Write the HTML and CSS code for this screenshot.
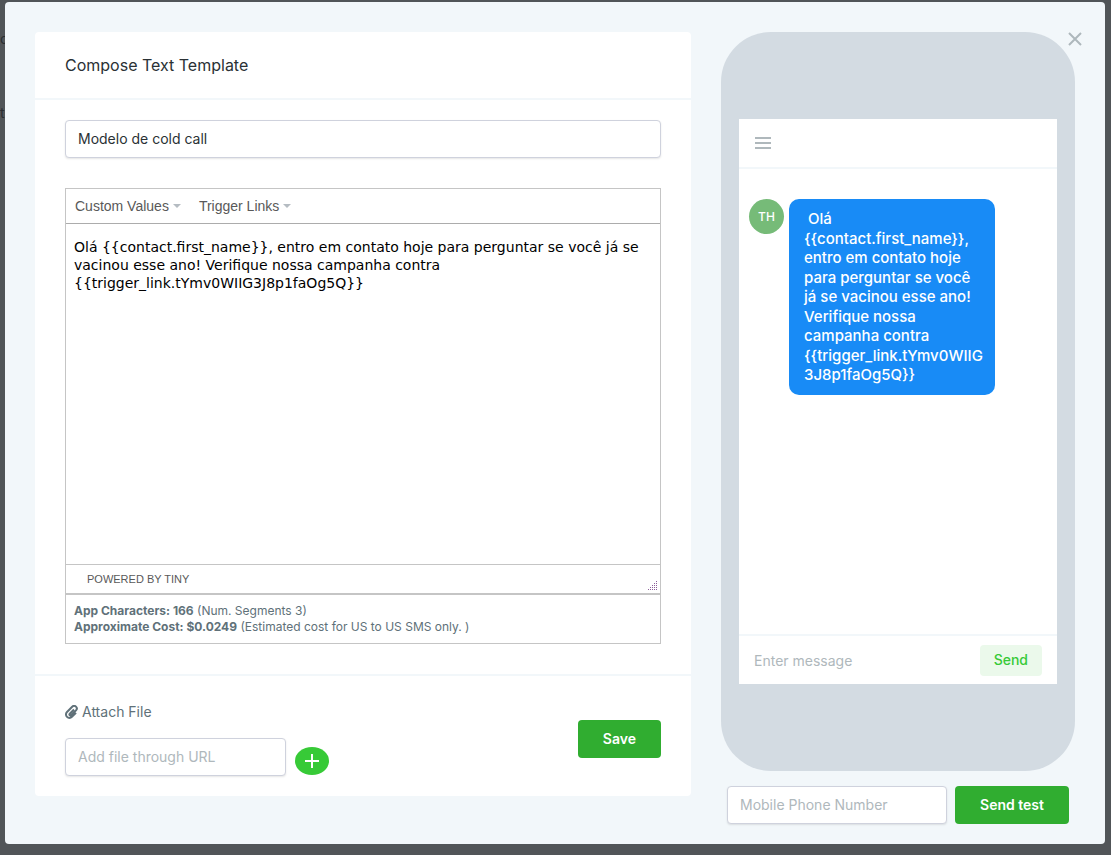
FILE: index.html
```html
<!DOCTYPE html>
<html lang="en">
<head>
    <meta charset="UTF-8">
    <meta name="viewport" content="width=device-width, initial-scale=1.0">
    <title>Compose Text Template</title>
    <link rel="stylesheet" href="styles.css">
</head>
<body>
    <!-- Page behind the modal -->
    <div class="backdrop" aria-hidden="true">
        <span class="backdrop-nav">o</span>
        <span class="backdrop-title">t</span>
    </div>

    <div class="modal" role="dialog" aria-labelledby="modalTitle">
        <button class="close-btn" type="button" aria-label="Close">
            <svg width="14" height="14" viewBox="0 0 14 14"><path d="M1 1L13 13M13 1L1 13"/></svg>
        </button>

        <!-- Template form -->
        <form class="card">
            <h1 class="card-header" id="modalTitle">Compose Text Template</h1>

            <div class="card-body">
                <input class="form-control" type="text" aria-label="Template name" value="Modelo de cold call">

                <div class="editor">
                    <div class="toolbar">
                        <button class="menu-btn" type="button">Custom Values<span class="caret"></span></button>
                        <button class="menu-btn" type="button">Trigger Links<span class="caret"></span></button>
                    </div>
                    <textarea class="editor-text" aria-label="Message" spellcheck="false">Olá {{contact.first_name}}, entro em contato hoje para perguntar se você já se vacinou esse ano! Verifique nossa campanha contra {{trigger_link.tYmv0WIIG3J8p1faOg5Q}}</textarea>
                    <div class="statusbar">
                        <a class="branding" href="#">POWERED BY TINY</a>
                        <svg class="resize" width="9" height="9" viewBox="0 0 9 9">
                            <path d="M8 0h1v1h-1zM6 2h1v1h-1zM8 2h1v1h-1zM4 4h1v1h-1zM6 4h1v1h-1zM8 4h1v1h-1zM2 6h1v1h-1zM4 6h1v1h-1zM6 6h1v1h-1zM8 6h1v1h-1zM0 8h1v1h-1zM2 8h1v1h-1zM4 8h1v1h-1zM6 8h1v1h-1zM8 8h1v1h-1z"/>
                        </svg>
                    </div>
                    <div class="counter">
                        <div><strong>App Characters: 166</strong> (Num. Segments 3)</div>
                        <div><strong>Approximate Cost: $0.0249</strong> (Estimated cost for US to US SMS only. )</div>
                    </div>
                </div>
            </div>

            <div class="card-footer">
                <div class="attach">
                    <label class="attach-label" for="fileUrl">
                        <svg width="13" height="14" viewBox="0 0 13 14"><path d="M9 4.5L4.8 8.8a1 1 0 0 0 1.5 1.5L11 5.4a2.6 2.6 0 0 0-3.8-3.7L2 7a3.4 3.4 0 0 0 4.9 4.9L11 7.8"/></svg>
                        Attach File
                    </label>
                    <div class="attach-row">
                        <input class="form-control" type="text" id="fileUrl" placeholder="Add file through URL">
                        <button class="add-btn" type="button" aria-label="Add file">
                            <svg width="14" height="14" viewBox="0 0 14 14"><path d="M7 0V14M0 7H14"/></svg>
                        </button>
                    </div>
                </div>
                <button class="btn" type="submit">Save</button>
            </div>
        </form>

        <!-- Phone preview -->
        <div class="preview">
            <div class="phone">
                <div class="screen">
                    <div class="screen-header">
                        <svg width="16" height="12" viewBox="0 0 16 12"><path d="M0 1H16M0 6H16M0 11H16"/></svg>
                    </div>
                    <div class="chat">
                        <div class="avatar">TH</div>
                        <div class="bubble">&nbsp;Olá {{contact.first_name}}, entro em contato hoje para perguntar se você já se vacinou esse ano! Verifique nossa campanha contra {{trigger_link.tYmv0WIIG3J8p1faOg5Q}}</div>
                    </div>
                    <div class="screen-footer">
                        <input class="message-input" type="text" aria-label="Message preview" placeholder="Enter message">
                        <button class="send-btn" type="button">Send</button>
                    </div>
                </div>
            </div>
            <div class="test-row">
                <input class="form-control" type="tel" aria-label="Mobile Phone Number" placeholder="Mobile Phone Number">
                <button class="btn" type="button">Send test</button>
            </div>
        </div>
    </div>
</body>
</html>
```
FILE: styles.css
```css
/* Global Styles */
* {
    box-sizing: border-box;
}

body {
    margin: 0;
    padding: 2px 6px 11px 5px;
    background-color: #515558;
    color: #607179;
    font-family: Inter, sans-serif;
    font-size: 14px;
}

input,
button,
textarea {
    margin: 0;
    font-family: inherit;
    font-size: 14px;
}

button {
    border: none;
    cursor: pointer;
}

svg path {
    fill: none;
    stroke: currentColor;
}

/* Page behind the modal */
.backdrop {
    position: absolute;
    top: 29px;
    left: 0;
    color: #2a2e31;
    line-height: 20px;
}

.backdrop-nav,
.backdrop-title {
    display: block;
}

.backdrop-title {
    margin-top: 54px;
}

/* Modal */
.modal {
    position: relative;
    display: flex;
    align-items: flex-start;
    gap: 30px;
    padding: 30px 30px 20px;
    background-color: #f2f7fa;
    border-radius: 4px;
}

.close-btn {
    position: absolute;
    top: 27px;
    right: 20px;
    display: flex;
    padding: 3px;
    background: none;
    color: #aeb8bc;
}

.close-btn path {
    stroke-width: 2;
}

/* Card */
.card {
    flex: 1;
    background-color: #fff;
    border-radius: 4px;
}

.card-header {
    margin: 0;
    padding: 22px 30px;
    border-bottom: 2px solid #f2f7fa;
    color: #2a3135;
    font-size: 16px;
    font-weight: 400;
    line-height: 22px;
}

.card-body {
    padding: 20px 30px 30px;
}

.card-footer {
    display: flex;
    align-items: center;
    justify-content: space-between;
    padding: 26px 30px 20px;
    border-top: 2px solid #f2f7fa;
}

.form-control {
    display: block;
    width: 100%;
    height: 38px;
    padding: 0 12px 2px;
    background-color: #fff;
    border: 1px solid #cfd2dd;
    border-radius: 4px;
    box-shadow: 0 1px 2px rgba(0, 0, 0, 0.1);
    color: #2a3135;
}

::placeholder {
    color: #afb8bc;
    opacity: 1;
}

.btn {
    height: 38px;
    padding: 0 25px 2px;
    background-color: #30ad30;
    border-radius: 4px;
    color: #fff;
    font-weight: 600;
    white-space: nowrap;
}

/* Editor */
.editor {
    margin-top: 30px;
    border: 1px solid #c5c5c5;
}

.toolbar {
    display: flex;
    gap: 18px;
    height: 35px;
    padding: 0 9px;
    border-bottom: 1px solid #acacac;
}

.menu-btn {
    display: flex;
    align-items: center;
    gap: 4px;
    padding: 0;
    background: none;
    color: #595959;
    font-family: "Liberation Sans", Arial, sans-serif;
}

.caret {
    border: 4px solid transparent;
    border-top-color: #b5bcc2;
    border-bottom: none;
}

.editor-text {
    display: block;
    width: 100%;
    height: 340px;
    padding: 14px 8px;
    border: none;
    color: #000;
    font-family: Verdana, "DejaVu Sans", sans-serif;
    line-height: 18px;
    resize: none;
}

.statusbar {
    display: flex;
    align-items: flex-end;
    justify-content: space-between;
    height: 31px;
    padding: 0 3px 3px 21px;
    border-top: 1px solid #c5c5c5;
    border-bottom: 2px solid #c5c5c5;
}

.branding {
    color: #595959;
    font-family: "Liberation Sans", Arial, sans-serif;
    font-size: 11px;
    line-height: 22px;
    text-decoration: none;
}

.resize path {
    fill: #8d5f9a;
    stroke: none;
}

.counter {
    padding: 8px;
    font-size: 12px;
    line-height: 16px;
}

.counter strong {
    font-weight: 700;
}

/* Attachment */
.attach-label {
    display: flex;
    align-items: center;
    gap: 4px;
    margin-bottom: 16px;
    line-height: 20px;
}

.attach-label path {
    stroke-width: 2;
}

.attach-row {
    display: flex;
    align-items: flex-end;
    gap: 9px;
}

.attach-row .form-control {
    width: 221px;
}

.add-btn {
    display: flex;
    align-items: center;
    justify-content: center;
    width: 34px;
    height: 28px;
    margin-bottom: 1px;
    padding: 0;
    background-color: #37ca37;
    border-radius: 50%;
    color: #fff;
}

.add-btn path {
    stroke-width: 2;
}

/* Phone preview */
.preview {
    flex: none;
    width: 354px;
}

.phone {
    padding: 87px 18px;
    background-color: #d3dbe2;
    border-radius: 50px;
}

.screen {
    display: flex;
    flex-direction: column;
    height: 565px;
    background-color: #fff;
}

.screen-header {
    display: flex;
    padding: 18px 16px;
    border-bottom: 2px solid #f2f7fa;
    color: #afb8bc;
}

.screen-header path {
    stroke-width: 2;
}

.chat {
    display: flex;
    flex: 1;
    align-items: flex-start;
    gap: 5px;
    padding: 30px 10px;
}

.avatar {
    flex: none;
    width: 35px;
    border-radius: 50%;
    background-color: #76bb78;
    color: #fff;
    font-size: 12px;
    font-weight: 500;
    line-height: 35px;
    text-align: center;
}

.bubble {
    width: 206px;
    padding: 10px 11px 10px 15px;
    background-color: #188bf6;
    border-radius: 10px;
    color: #fff;
    font-size: 15px;
    font-weight: 500;
    line-height: 1.3;
    overflow-wrap: break-word;
    word-break: break-word;
}

.screen-footer {
    display: flex;
    align-items: center;
    padding: 9px 15px 8px;
    border-top: 2px solid #f2f7fa;
}

.message-input {
    flex: 1;
    min-width: 0;
    padding: 0;
    border: none;
}

.send-btn {
    height: 31px;
    padding: 0 14px 2px;
    background-color: #ebf9eb;
    border-radius: 4px;
    color: #37ca37;
    font-weight: 500;
}

.test-row {
    display: flex;
    gap: 8px;
    padding: 15px 6px 0;
}

.test-row .form-control {
    flex: 1;
    min-width: 0;
}

/* Responsive */
@media (max-width: 800px) {
    .modal {
        flex-direction: column;
        align-items: center;
    }

    .card {
        width: 100%;
    }
}
```
